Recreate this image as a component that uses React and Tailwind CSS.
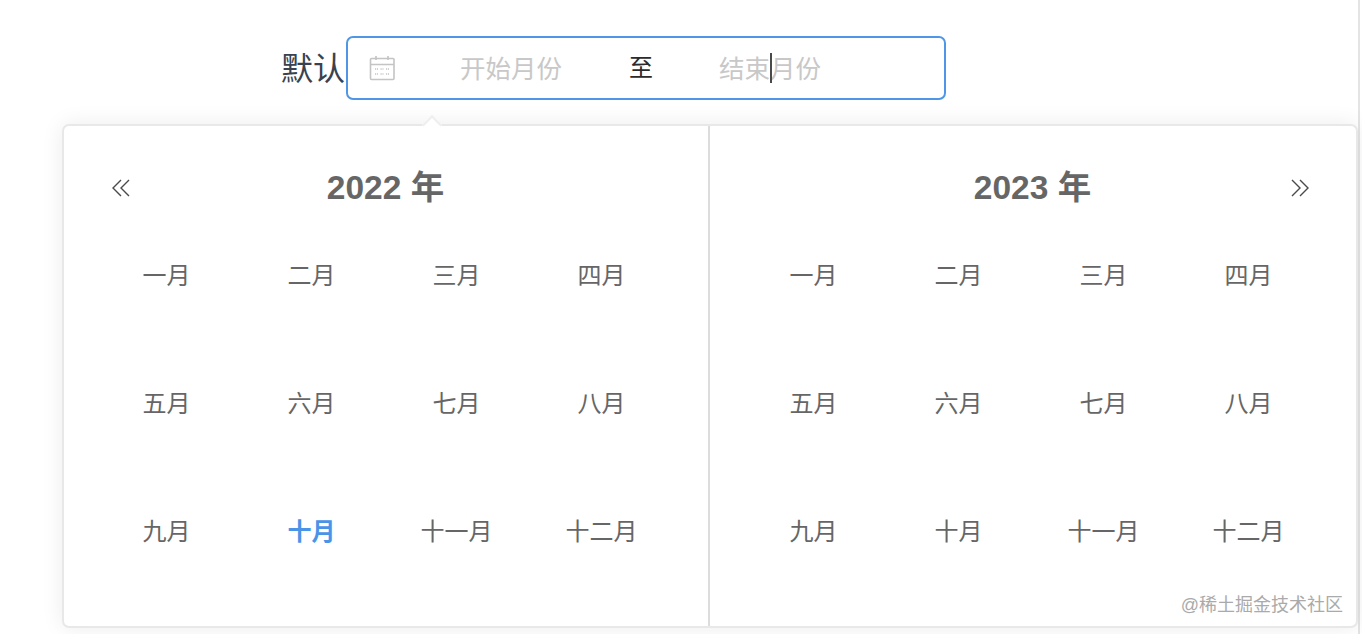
import React from "react";

const MONTHS = ["一月", "二月", "三月", "四月", "五月", "六月", "七月", "八月", "九月", "十月", "十一月", "十二月"];

function CalendarIcon() {
  return (
    <svg width="26" height="26" viewBox="0 0 26 26" fill="none" stroke="#c4c4c4" strokeWidth="1.6" className="shrink-0">
      <rect x="1.5" y="3.5" width="23.5" height="21" rx="1" />
      <path d="M1.5 9.5h23.5M7 1v4M19 1v4" />
      <path d="M6 14h3M11.5 14h3M17 14h3M6 19h3M11.5 19h3M17 19h3" strokeDasharray="1.2 0.8" />
    </svg>
  );
}

function DoubleChevron({ dir }) {
  return (
    <svg width="18" height="18" viewBox="0 0 18 18" fill="none" stroke="#4a4a4a" strokeWidth="1.4">
      {dir === "left" ? <path d="M9 1 1 9l8 8M17 1 9 9l8 8" /> : <path d="m1 1 8 8-8 8M9 1l8 8-8 8" />}
    </svg>
  );
}

function YearPanel({ year, active, left, right, className }) {
  return (
    <div className={className + " pt-[42px]"}>
      <div className="grid grid-cols-[1fr_auto_1fr] items-center h-[40px] w-[583px]">
        <div className="pl-[18px] flex items-center">{left && <DoubleChevron dir="left" />}</div>
        <div className="text-[33.5px] font-bold text-[#666666] leading-[40px]">{year} 年</div>
        <div className="pr-[15px] flex items-center justify-end">{right && <DoubleChevron dir="right" />}</div>
      </div>
      <div className="grid grid-cols-[repeat(4,145px)] mt-[48px]">
        {MONTHS.map((m, i) => (
          <div
            key={m}
            className={
              "h-[128px] pt-[4px] text-center text-[24px] leading-[32px] " +
              (i === active ? "text-[#4a94e8] font-bold" : "text-[#666666]")
            }
          >
            {m}
          </div>
        ))}
      </div>
    </div>
  );
}

export default function App() {
  return (
    <div className="relative h-[634px] w-[1362px] overflow-hidden bg-white font-['Liberation_Sans','Noto_Sans_CJK_SC',sans-serif]">
      <div className="h-[634px] w-[1360px] border-r-2 border-[#e4e4e4] pt-[36px]">
        <div className="flex items-center pl-[281px]">
          <span className="text-[32px] leading-[66px] h-[64px] text-[#39424e] w-[65px] whitespace-nowrap">默认</span>
          <div className="flex items-center w-[600px] h-[64px] border-2 border-[#4f97e6] rounded-[7px] pl-[21px]">
            <CalendarIcon />
            <span className="ml-[65px] w-[104px] text-[25.5px] leading-[36px] pt-[2px] text-[#c8c8c8]">开始月份</span>
            <span className="ml-[65px] w-[24px] text-[24px] text-[#2b2b2b]">至</span>
            <span className="relative ml-[66px] text-[25.5px] leading-[36px] pt-[2px] text-[#c8c8c8]">
              结束月份
              <span className="absolute left-[51px] top-[4px] h-[30px] w-[2px] bg-[#4a4a4a]" />
            </span>
          </div>
        </div>

        <div className="relative ml-[62px] mt-[24px] flex w-[1296px] h-[504px] border-2 border-[#e8e8e8] rounded-[7px] bg-white shadow-[0_0_22px_rgba(0,0,0,0.08)]">
          <div className="absolute left-[361px] -top-[8px] w-[14px] h-[14px] rotate-45 bg-white border-l-2 border-t-2 border-[#eeeeee]" />
          <YearPanel year={2022} active={9} left className="w-[644px] pl-[30px]" />
          <div className="w-[2px] bg-[#dcdcdc] shrink-0" />
          <YearPanel year={2023} active={-1} right className="w-[646px] pl-[31px]" />
          <span className="absolute right-[13px] bottom-[9px] text-[18px] leading-[24px] text-[#aaaaaa]">@稀土掘金技术社区</span>
        </div>
      </div>
    </div>
  );
}
